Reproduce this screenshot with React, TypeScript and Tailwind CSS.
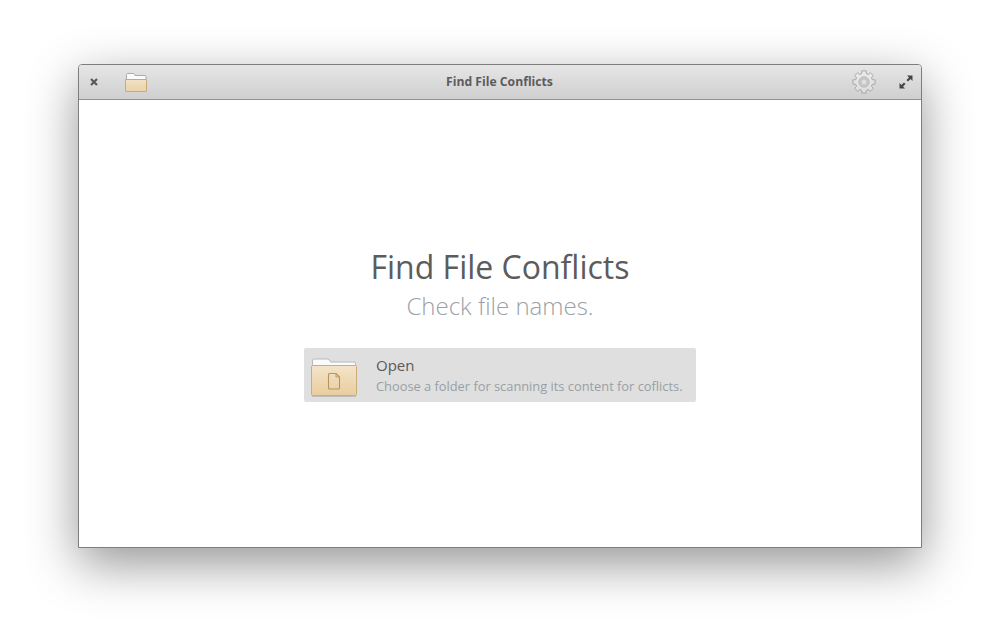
import React from "react";

function FolderSmall() {
  return (
    <svg width="22" height="20" viewBox="0 0 22 20">
      <defs>
        <linearGradient id="smallFolder" x1="0" y1="0" x2="0" y2="1">
          <stop offset="0" stopColor="#f2e2c6" />
          <stop offset="1" stopColor="#ebd2a8" />
        </linearGradient>
      </defs>
      <path d="M1.500 8 V1.500 q0-1 1-1 h6 q1 0 1.500 2 h10 q1 0 1 1 v5z" fill="#fbfbfb" stroke="#aaaaaa" />
      <rect x="0.500" y="6.500" width="21" height="12" rx="0.500" fill="url(#smallFolder)" stroke="#c6aa78" />
    </svg>
  );
}

function FolderLarge() {
  return (
    <svg width="46" height="44" viewBox="0 0 46 44">
      <defs>
        <linearGradient id="bigFolder" x1="0" y1="0" x2="0" y2="1">
          <stop offset="0" stopColor="#f3e4ca" />
          <stop offset="1" stopColor="#e9cd9e" />
        </linearGradient>
      </defs>
      <path d="M1.500 14 V8 q0-2 2-2 h13 q2 0 3 3 h23.500 q1.500 0 1.500 1.500 V14z" fill="#fbfbfb" stroke="#b8b8b8" />
      <rect x="0.500" y="12.500" width="45" height="30" rx="1" fill="url(#bigFolder)" stroke="#c9ad7c" />
      <rect x="1" y="43" width="44" height="1" fill="#000" opacity="0.14" />
      <path d="M18.500 20.500 h6.500 l3.500 3.500 v11 q0 1-1 1 h-9 q-1 0-1-1 v-13.500 q0-1 1-1z" fill="none" stroke="#b8945c" strokeWidth="1.100" />
      <path d="M25 20.500 v3.500 h3.500" fill="none" stroke="#b8945c" strokeWidth="0.900" />
    </svg>
  );
}

function Gear() {
  // eight square-ish teeth round a ring
  const outer = 11.3;
  const root = 8.6;
  const pts: string[] = [];
  for (let i = 0; i < 8; i++) {
    const a = (i * Math.PI) / 4;
    const at = (r: number, d: number) =>
      `${(12 + r * Math.sin(a + d)).toFixed(2)} ${(12 - r * Math.cos(a + d)).toFixed(2)}`;
    pts.push(at(root, -0.27), at(outer, -0.19), at(outer, 0.19), at(root, 0.27));
  }
  return (
    <svg width="24" height="24" viewBox="0 0 24 24">
      <defs>
        <linearGradient id="gearFill" x1="0" y1="0" x2="0" y2="1">
          <stop offset="0" stopColor="#ececec" />
          <stop offset="1" stopColor="#dcdcdc" />
        </linearGradient>
      </defs>
      <path d={`M${pts.join(" L")}z`} fill="url(#gearFill)" stroke="#a8a8a8" strokeWidth="1" strokeLinejoin="round" />
      <circle cx="12" cy="12" r="5.200" fill="#c8c8c8" stroke="#bcbcbc" strokeWidth="1" />
      <circle cx="12" cy="12" r="3" fill="#dedede" stroke="#b8b8b8" strokeWidth="0.600" />
    </svg>
  );
}

function CloseIcon() {
  return (
    <svg width="8" height="8" viewBox="0 0 8 8">
      <path d="M1 1 L7 7 M7 1 L1 7" stroke="#5a5a5a" strokeWidth="2.200" />
    </svg>
  );
}

function MaximizeIcon() {
  return (
    <svg width="14" height="14" viewBox="0 0 14 14">
      <path d="M8 0.500 h5.500 v5.500 l-2-2 -2.500 2.500 -1.500-1.500 2.500-2.500z" fill="#444444" />
      <path d="M6 13.500 h-5.500 v-5.500 l2 2 2.500-2.500 1.500 1.500 -2.500 2.500z" fill="#444444" />
    </svg>
  );
}

export default function App() {
  return (
    <div className="h-[640px] w-[1000px] overflow-hidden bg-white pl-[78px] pt-[64px] font-['Open_Sans',sans-serif]">
      {/* Window */}
      <div className="flex h-[484px] w-[844px] flex-col overflow-hidden rounded-t-[4px] border border-[#7d7d7d] bg-white shadow-[0_16px_50px_rgba(0,0,0,0.42)]">
        {/* Titlebar */}
        <div className="flex h-[35px] shrink-0 items-center border-b border-[#929292] bg-gradient-to-b from-[#e6e6e6] to-[#cfcfcf]">
          <div className="ml-[11px]">
            <CloseIcon />
          </div>
          <div className="ml-[27px] mt-[1px]">
            <FolderSmall />
          </div>
          <div className="flex-1 text-center text-[12.2px] font-bold text-[#5c5c5c]">
            Find File Conflicts
          </div>
          <div className="mr-[23px]">
            <Gear />
          </div>
          <div className="mr-[8px]">
            <MaximizeIcon />
          </div>
        </div>

        {/* Welcome */}
        <div className="flex flex-1 flex-col items-center pt-[142px]">
          <h1 className="text-[32px] leading-[50px] font-normal text-[#5c5c5c]">Find File Conflicts</h1>
          <p className="mt-[1px] mb-[1px] text-[24px] leading-[26px] font-light text-[#98a2a8]">Check file names.</p>
          <div className="mt-[28px] flex h-[54px] w-[392px] items-center rounded-[2px] bg-[#dfdfdf] pl-[7px]">
            <FolderLarge />
            <div className="ml-[19px]">
              <div className="mt-[-1px] text-[15px] leading-[20px] text-[#5a5a5a]">Open</div>
              <div className="mt-[2px] text-[12.83px] leading-[18px] text-[#979fa5]">
                Choose a folder for scanning its content for coflicts.
              </div>
            </div>
          </div>
        </div>
      </div>
    </div>
  );
}
